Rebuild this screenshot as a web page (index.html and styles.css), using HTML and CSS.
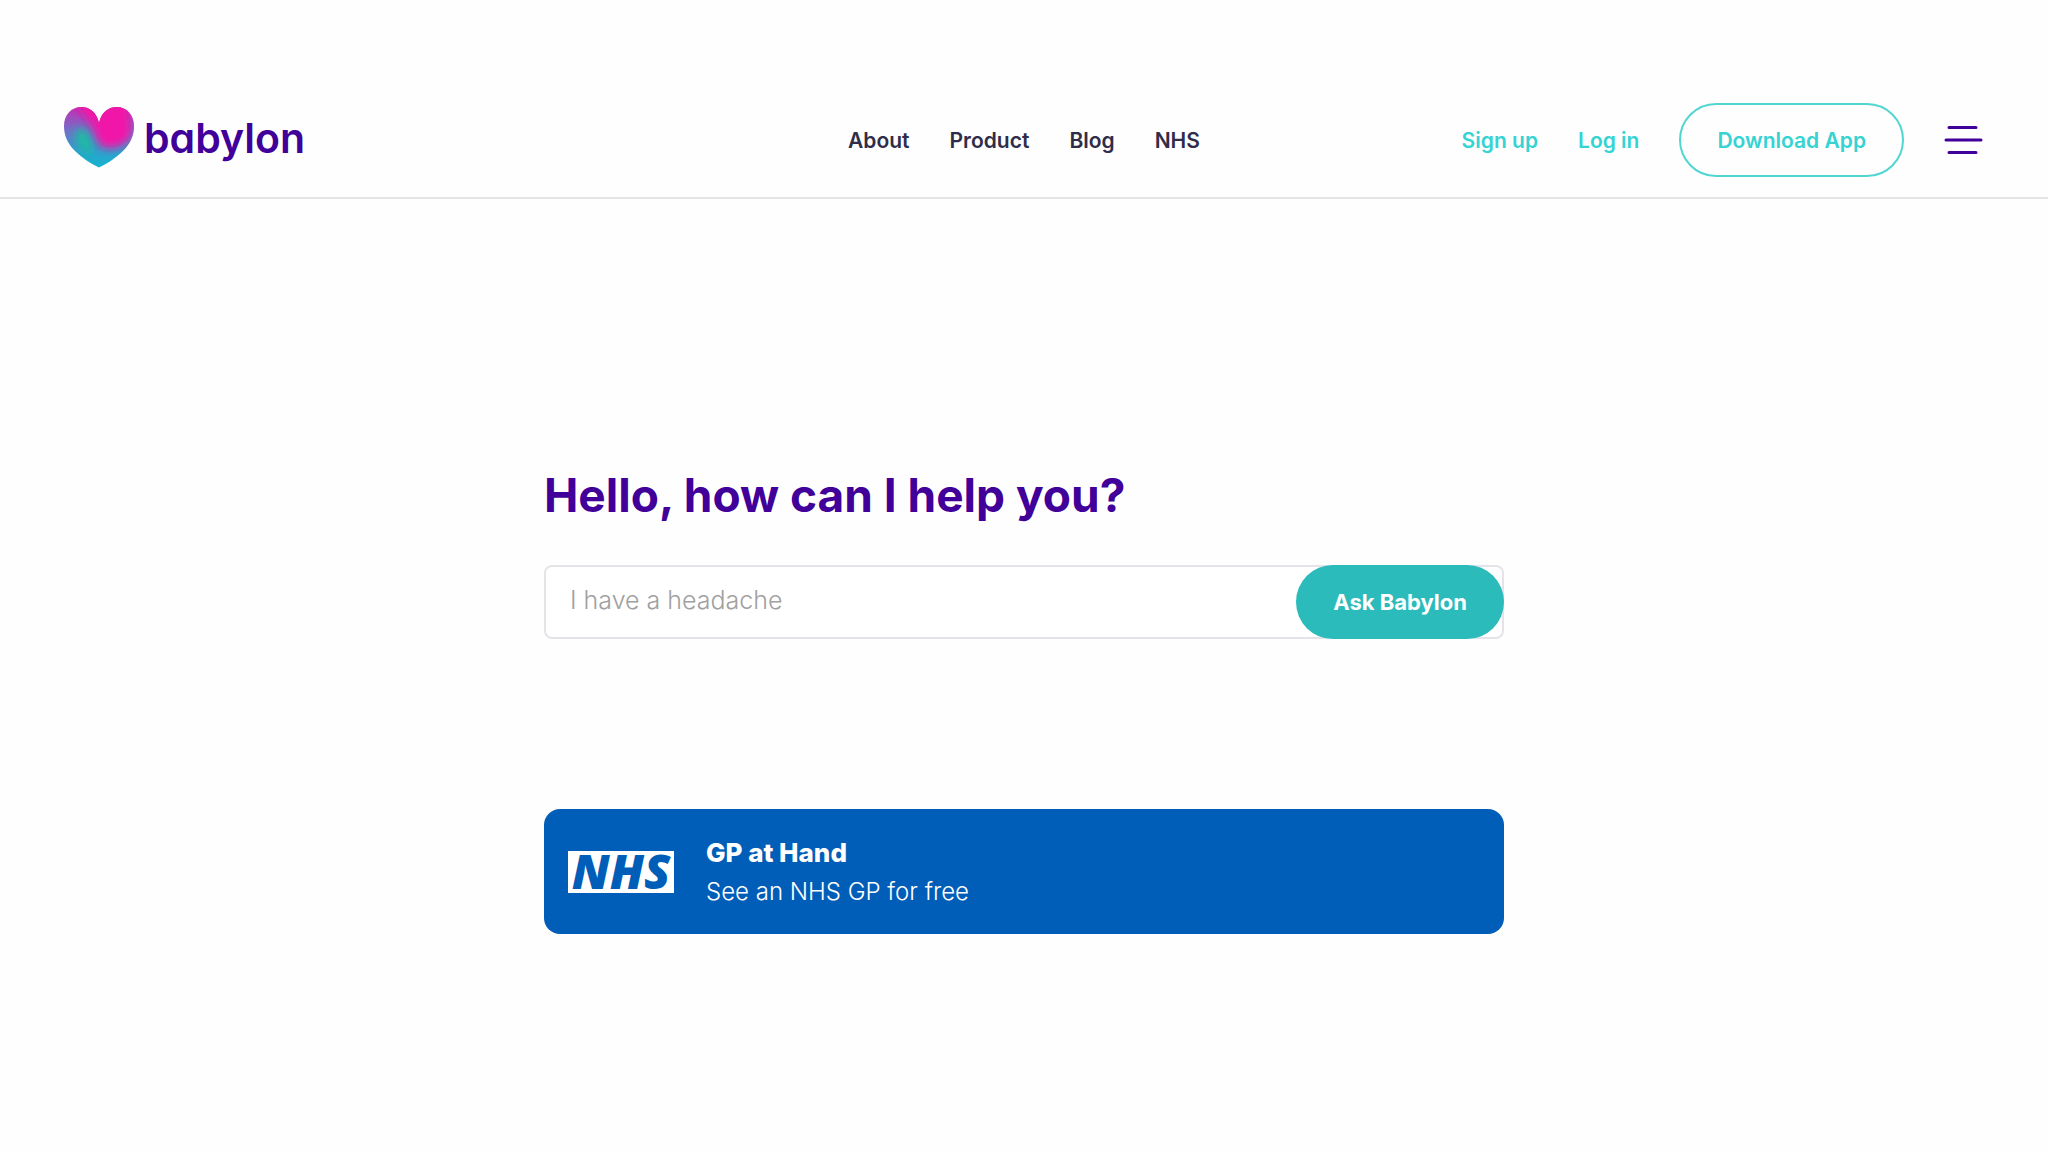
FILE: index.html
```html
<!DOCTYPE html>
<html lang="en">
<head>
<meta charset="utf-8">
<meta name="viewport" content="width=device-width, initial-scale=1">
<title>Babylon</title>
<link rel="stylesheet" href="styles.css">
</head>
<body>
<header class="header">
  <a class="brand" href="#">
    <svg class="brand-heart" viewBox="0 0 70 61" aria-hidden="true">
      <defs>
        <clipPath id="heart"><path d="M35 60.500C29 58 18 51 10.500 43.500C4 37 0 29 0 19C0 8 7 0 17.500 0C26 0 33 6 35 16C37 6 44 0 52.500 0C63 0 70 8 70 19C70 29 66 37 59.500 43.500C52 51 41 58 35 60.500Z"/></clipPath>
        <linearGradient id="base" x1="0" y1="0" x2="0" y2="1">
          <stop offset="0" stop-color="#c42fb4"/>
          <stop offset=".4" stop-color="#6f72c8"/>
          <stop offset=".75" stop-color="#2ba3cc"/>
          <stop offset="1" stop-color="#12b5d0"/>
        </linearGradient>
        <filter id="soft" x="-50%" y="-50%" width="200%" height="200%"><feGaussianBlur stdDeviation="4"/></filter>
      </defs>
      <g clip-path="url(#heart)">
        <rect width="70" height="61" fill="url(#base)"/>
        <path d="M10 -6H64L68 26C64 38 52 42 42 41C31 38 32 25 25 15Z" fill="#f012a8" filter="url(#soft)"/>
        <path d="M12 24C20 18 25 26 27 36C29 44 28 48 23 46C16 42 10 34 12 24Z" fill="#18bfa0" filter="url(#soft)"/>
      </g>
    </svg>
    <span class="brand-name">babylon</span>
  </a>
  <nav class="nav" aria-label="Main">
    <a href="#">About</a>
    <a href="#">Product</a>
    <a href="#">Blog</a>
    <a href="#">NHS</a>
  </nav>
  <div class="actions">
    <a href="#">Sign up</a>
    <a href="#">Log in</a>
    <button class="download" type="button">Download App</button>
    <button class="menu" type="button" aria-label="Menu">
      <svg viewBox="0 0 40 30" width="40" height="30" fill="none" stroke="#400099" stroke-width="3" stroke-linecap="round"><path d="M5 2.500H32M2 15H37M5 27.500H32"/></svg>
    </button>
  </div>
</header>
<main class="main">
  <h1 class="title"><label for="question">Hello, how can I help you?</label></h1>
  <form class="ask">
    <input class="ask-input" id="question" type="text" placeholder="I have a headache">
    <button class="ask-button" type="button">Ask Babylon</button>
  </form>
  <a class="card" href="#">
    <span class="nhs">NHS</span>
    <span class="card-text">
      <strong>GP at Hand</strong>
      <span>See an NHS GP for free</span>
    </span>
  </a>
</main>
</body>
</html>
```
FILE: styles.css
```css
* { box-sizing: border-box; }
body {
  margin: 0;
  background: #fefefe;
  color: #2f2d4a;
  font-family: Inter, "Liberation Sans", sans-serif;
}
a { color: inherit; text-decoration: none; }
button, input { font: inherit; }

.header {
  display: grid;
  grid-template-columns: 1fr auto 1fr;
  align-items: center;
  padding: 103px 64px 20px;
  border-bottom: 2px solid #e4e4e4;
}
.brand { display: flex; align-items: center; gap: 10px; padding-bottom: 5px; }
.brand-heart { width: 70px; height: 61px; }
.brand-name {
  color: #400099;
  font-size: 41px;
  line-height: 48px;
  font-weight: 600;
  font-feature-settings: "cv11";
}
.nav { display: flex; gap: 40px; font-size: 21px; font-weight: 600; }
.actions {
  display: flex;
  align-items: center;
  justify-content: flex-end;
  gap: 40px;
  color: #35d3d3;
  font-size: 21px;
  font-weight: 600;
}
.download {
  padding: 0 36px;
  height: 74px;
  border: 2px solid #4fd6d2;
  border-radius: 37px;
  background: none;
  color: inherit;
}
.menu { display: flex; padding: 0; border: 0; background: none; }

.main {
  max-width: 960px;
  margin: 0 auto;
  padding: 264px 0 80px;
}
.title {
  margin: 0 0 38px;
  color: #400099;
  font-size: 46px;
  line-height: 64px;
  font-weight: 700;
}
.ask {
  display: flex;
  height: 74px;
  margin-bottom: 170px;
  border: 2px solid #e6e3e8;
  border-radius: 8px;
  background: #fff;
}
.ask-input {
  flex: 1;
  min-width: 0;
  padding: 0 24px 5px;
  border: 0;
  background: none;
  font-size: 25px;
  font-weight: 300;
}
.ask-input::placeholder { color: #a0a0a0; opacity: 1; }
.ask-button {
  margin: -2px;
  padding: 0 37px;
  border: 0;
  border-radius: 37px;
  background: #2cbbbb;
  color: #fff;
  font-size: 22px;
  font-weight: 700;
}
.card {
  display: flex;
  align-items: center;
  gap: 32px;
  min-height: 125px;
  padding: 0 24px;
  border-radius: 16px;
  background: #005eb8;
  color: #fff;
}
.nhs {
  width: 106px;
  height: 42px;
  background: #fff;
  color: #005eb8;
  font: italic 800 48px/40px "Open Sans", "Noto Sans", sans-serif;
  text-align: center;
}
.card-text {
  display: flex;
  flex-direction: column;
  font-size: 24px;
  line-height: 39px;
  font-weight: 300;
}
.card-text strong { font-size: 26px; font-weight: 800; }
```
